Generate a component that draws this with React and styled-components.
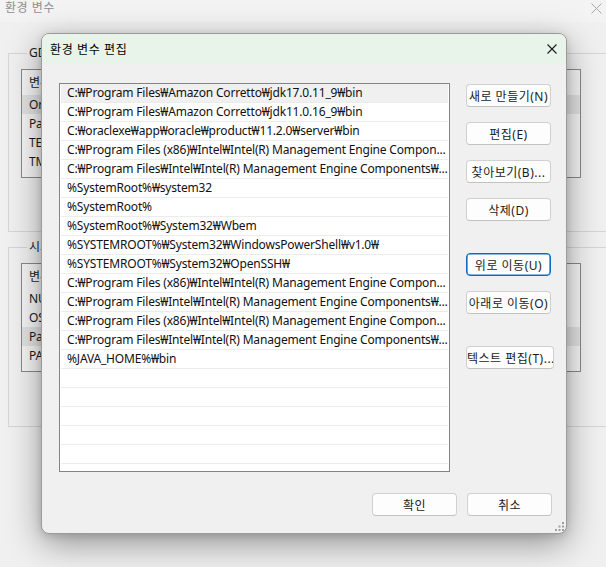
import React from "react";
import styled, { createGlobalStyle } from "styled-components";

const FONT = `"Noto Sans", "Noto Sans CJK KR", sans-serif`;

const Global = createGlobalStyle`
  * { box-sizing: border-box; }
  html, body { margin: 0; padding: 0; background: #f0f0f0; overflow: hidden; }
`;

const Screen = styled.div`
  position: relative;
  width: 606px;
  height: 567px;
  overflow: hidden;
  background: #f0f0f0;
  font-family: ${FONT};
  font-size: 12px;
  color: #1a1a1a;
`;

const ParentTitleBar = styled.div`
  height: 22px;
  display: flex;
  justify-content: space-between;
  align-items: flex-start;
  padding: 1px 4px 0 5px;
  background: #f3f3f3;
  color: #8f8f8f;
  line-height: 13px;
  letter-spacing: 0.5px;
`;

const ParentTitle = styled.span`
  margin-top: 0;
`;

const ParentClose = styled.svg`
  margin-top: 2px;
`;

const ParentBody = styled.div`
  display: flex;
  flex-direction: column;
  gap: 7px;
  padding: 23px 0 0 8px;
`;

const Group = styled.fieldset`
  margin: 0;
  width: 640px;
  height: ${(p) => p.$h}px;
  border: 1px solid #d6d6d6;
  padding: 8px 0 0 12px;
  min-inline-size: auto;
`;

const Legend = styled.legend`
  margin-left: 6px;
  padding: 0 2px;
  line-height: 16px;
  color: #1a1a1a;
`;

const ParentList = styled.div`
  width: 560px;
  height: 109px;
  border: 1px solid #8a8a8a;
  background: #f6f6f6;
  display: flex;
  flex-direction: column;
  letter-spacing: -0.15px;
`;

const ParentHeader = styled.div`
  height: 25px;
  line-height: 25px;
  padding-left: 7px;
`;

const ParentRow = styled.div`
  height: 19px;
  line-height: 19px;
  padding-left: 7px;
  background: ${(p) => (p.$selected ? "#e3e3e3" : "transparent")};
`;

const Dialog = styled.div`
  position: absolute;
  left: 41px;
  top: 33px;
  width: 526px;
  height: 501px;
  display: flex;
  flex-direction: column;
  background: #f0f0f0;
  border: 1px solid #9a9a9a;
  border-radius: 8px;
  overflow: hidden;
  box-shadow: 0 10px 34px rgba(0, 0, 0, 0.38), 0 2px 8px rgba(0, 0, 0, 0.14);
`;

const DialogTitleBar = styled.div`
  height: 30px;
  flex-shrink: 0;
  display: flex;
  align-items: center;
  justify-content: space-between;
  padding: 0 9px 0 8px;
  background: #e8f4e9;
  color: #000;
  letter-spacing: 0.6px;
`;

const DialogBody = styled.div`
  flex: 1;
  display: flex;
  flex-direction: column;
  padding: 19px 14px 16px 17px;
`;

const MainRow = styled.div`
  display: flex;
  gap: 16px;
  align-items: flex-start;
`;

const PathList = styled.div`
  flex-shrink: 0;
  width: 391px;
  height: 389px;
  border: 1px solid #848484;
  background: #fff;
  padding: 0 1px;
  overflow: hidden;
`;

const PathRow = styled.div`
  height: 19px;
  line-height: 18px;
  padding-left: 6px;
  border-bottom: 1px solid #ececec;
  background: ${(p) => (p.$selected ? "#f0f0f0" : "#fff")};
  color: #111;
  letter-spacing: -0.18px;
  white-space: nowrap;
  overflow: hidden;
`;

const ButtonColumn = styled.div`
  display: flex;
  flex-direction: column;
  gap: 32px;
  padding-top: 1px;
`;

const ButtonGroup = styled.div`
  display: flex;
  flex-direction: column;
  gap: 15px;
`;

const Button = styled.button`
  width: ${(p) => p.$w || 85}px;
  height: 23px;
  padding: 0;
  border: 1px solid ${(p) => (p.$focused ? "#0f6cbd" : "#d0d0d0")};
  border-bottom-color: ${(p) => (p.$focused ? "#0f6cbd" : "#c2c2c2")};
  box-shadow: ${(p) => (p.$focused ? "inset 0 0 0 0.6px #0f6cbd" : "none")};
  border-radius: 4px;
  background: #fdfdfd;
  font-family: ${FONT};
  font-size: 12px;
  letter-spacing: 0.5px;
  color: #1b1b1b;
  white-space: nowrap;
  overflow: hidden;
  cursor: default;
`;

const Footer = styled.div`
  display: flex;
  justify-content: flex-end;
  gap: 10px;
  margin-top: 21px;
`;

const Grip = styled.svg`
  position: absolute;
  right: 2px;
  bottom: 2px;
`;

const paths = [
  "C:₩Program Files₩Amazon Corretto₩jdk17.0.11_9₩bin",
  "C:₩Program Files₩Amazon Corretto₩jdk11.0.16_9₩bin",
  "C:₩oraclexe₩app₩oracle₩product₩11.2.0₩server₩bin",
  "C:₩Program Files (x86)₩Intel₩Intel(R) Management Engine Compon...",
  "C:₩Program Files₩Intel₩Intel(R) Management Engine Components₩...",
  "%SystemRoot%₩system32",
  "%SystemRoot%",
  "%SystemRoot%₩System32₩Wbem",
  "%SYSTEMROOT%₩System32₩WindowsPowerShell₩v1.0₩",
  "%SYSTEMROOT%₩System32₩OpenSSH₩",
  "C:₩Program Files (x86)₩Intel₩Intel(R) Management Engine Compon...",
  "C:₩Program Files₩Intel₩Intel(R) Management Engine Components₩...",
  "C:₩Program Files (x86)₩Intel₩Intel(R) Management Engine Compon...",
  "C:₩Program Files₩Intel₩Intel(R) Management Engine Components₩...",
  "%JAVA_HOME%₩bin",
];

const rows = [...paths, ...Array(6).fill("")];

const XIcon = ({ size, color }) => (
  <svg width={size} height={size} viewBox={`0 0 ${size} ${size}`}>
    <path
      d={`M0.5 0.5 L${size - 0.5} ${size - 0.5} M${size - 0.5} 0.5 L0.5 ${size - 0.5}`}
      stroke={color}
      strokeWidth="1.1"
      fill="none"
    />
  </svg>
);

export default function App() {
  return (
    <Screen>
      <Global />
      <ParentTitleBar>
        <ParentTitle>환경 변수</ParentTitle>
        <ParentClose width="11" height="11" viewBox="0 0 11 11">
          <path d="M0.5 0.5 L10.5 10.5 M10.5 0.5 L0.5 10.5" stroke="#a9a9a9" strokeWidth="1" fill="none" />
        </ParentClose>
      </ParentTitleBar>
      <ParentBody>
        <Group $h={187}>
          <Legend>GD0의 사용자 변수</Legend>
          <ParentList>
            <ParentHeader>변수</ParentHeader>
            <ParentRow $selected>OneDrive</ParentRow>
            <ParentRow>Path</ParentRow>
            <ParentRow>TEMP</ParentRow>
            <ParentRow>TMP</ParentRow>
          </ParentList>
        </Group>
        <Group $h={188}>
          <Legend>시스템 변수</Legend>
          <ParentList>
            <ParentHeader>변수</ParentHeader>
            <ParentRow>NUMBER_OF_PROCESSORS</ParentRow>
            <ParentRow>OS</ParentRow>
            <ParentRow $selected>Path</ParentRow>
            <ParentRow>PATHEXT</ParentRow>
          </ParentList>
        </Group>
      </ParentBody>

      <Dialog>
        <DialogTitleBar>
          <span>환경 변수 편집</span>
          <XIcon size={10} color="#1a1a1a" />
        </DialogTitleBar>
        <DialogBody>
          <MainRow>
            <PathList>
              {rows.map((p, i) => (
                <PathRow key={i} $selected={i === 0}>
                  {p}
                </PathRow>
              ))}
            </PathList>
            <ButtonColumn>
              <ButtonGroup>
                <Button>새로 만들기(N)</Button>
                <Button>편집(E)</Button>
                <Button>찾아보기(B)...</Button>
                <Button>삭제(D)</Button>
              </ButtonGroup>
              <ButtonGroup>
                <Button $focused>위로 이동(U)</Button>
                <Button>아래로 이동(O)</Button>
              </ButtonGroup>
              <ButtonGroup>
                <Button $w={88}>텍스트 편집(T)...</Button>
              </ButtonGroup>
            </ButtonColumn>
          </MainRow>
          <Footer>
            <Button>확인</Button>
            <Button>취소</Button>
          </Footer>
        </DialogBody>
        <Grip width="9" height="9" viewBox="0 0 9 9">
          <g fill="#a0a0a0">
            <rect x="7" y="0" width="2" height="2" />
            <rect x="3.5" y="3.5" width="2" height="2" />
            <rect x="7" y="3.5" width="2" height="2" />
            <rect x="0" y="7" width="2" height="2" />
            <rect x="3.5" y="7" width="2" height="2" />
            <rect x="7" y="7" width="2" height="2" />
          </g>
        </Grip>
      </Dialog>
    </Screen>
  );
}
